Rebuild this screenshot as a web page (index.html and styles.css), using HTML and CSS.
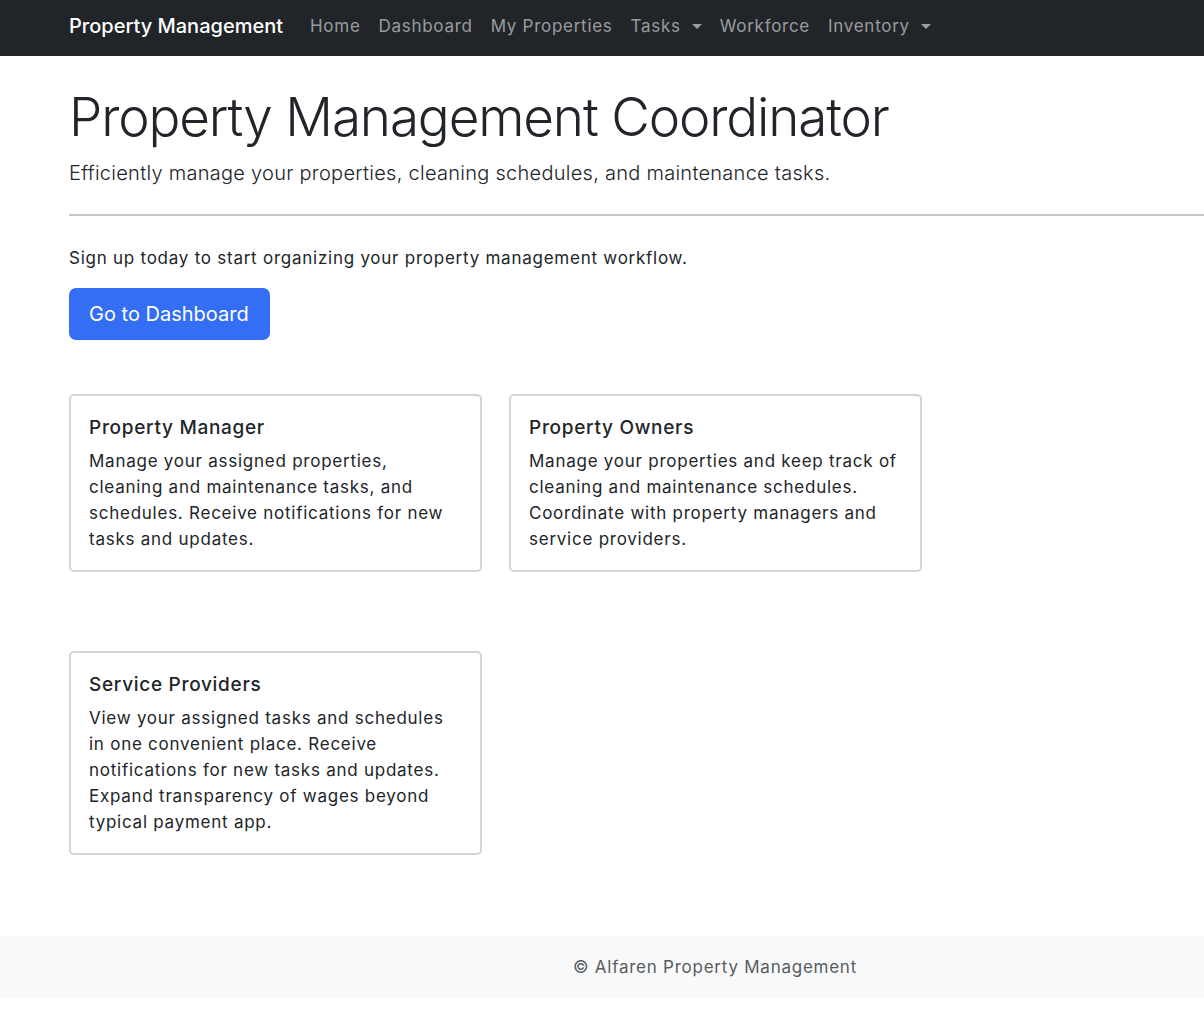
FILE: index.html
```html
<!DOCTYPE html>
<html lang="en">
<head>
<meta charset="utf-8">
<title>Property Management</title>
<link rel="stylesheet" href="styles.css">
</head>
<body>
<nav class="navbar">
  <a class="brand" href="#">Property Management</a>
  <ul class="nav">
    <li><a class="nav-link" href="#">Home</a></li>
    <li><a class="nav-link" href="#">Dashboard</a></li>
    <li><a class="nav-link" href="#">My Properties</a></li>
    <li><a class="nav-link dropdown" href="#">Tasks</a></li>
    <li><a class="nav-link" href="#">Workforce</a></li>
    <li><a class="nav-link dropdown" href="#">Inventory</a></li>
  </ul>
</nav>
<main class="main">
  <section class="hero">
    <h1 class="display">Property Management Coordinator</h1>
    <p class="lead">Efficiently manage your properties, cleaning schedules, and maintenance tasks.</p>
    <hr class="divider">
    <p class="signup">Sign up today to start organizing your property management workflow.</p>
    <a class="btn" href="#">Go to Dashboard</a>
  </section>
  <section class="cards">
    <div class="card">
      <h5 class="card-title">Property Manager</h5>
      <p class="card-text">Manage your assigned properties, cleaning and maintenance tasks, and schedules. Receive notifications for new tasks and updates.</p>
    </div>
    <div class="card">
      <h5 class="card-title">Property Owners</h5>
      <p class="card-text">Manage your properties and keep track of cleaning and maintenance schedules. Coordinate with property managers and service providers.</p>
    </div>
    <div class="card">
      <h5 class="card-title">Service Providers</h5>
      <p class="card-text">View your assigned tasks and schedules in one convenient place. Receive notifications for new tasks and updates. Expand transparency of wages beyond typical payment app.</p>
    </div>
  </section>
</main>
<footer class="footer">
  <span class="footer-text">© Alfaren Property Management</span>
</footer>
</body>
</html>
```
FILE: styles.css
```css
* { box-sizing: border-box; }
html, body { margin: 0; padding: 0; }
body {
  font-family: "Inter", "Noto Sans", sans-serif;
  color: #212529;
  background: #fff;
  overflow-x: hidden;
}
a { text-decoration: none; }

.navbar {
  height: 56px;
  background: #212529;
  display: flex;
  align-items: center;
  padding-left: 69px;
  padding-bottom: 4px;
}
.brand {
  color: #fff;
  font-size: 20px;
  font-weight: 450;
  letter-spacing: 0;
  margin-right: 18px;
}
.nav {
  display: flex;
  list-style: none;
  margin: 0;
  padding: 0;
}
.nav-link {
  display: flex;
  align-items: center;
  color: rgba(255,255,255,0.55);
  font-size: 17px;
  letter-spacing: 0.72px;
  padding: 8px 9px;
}
.dropdown::after {
  content: "";
  display: inline-block;
  margin-left: 11px;
  border-top: 5px solid;
  border-left: 5px solid transparent;
  border-right: 5px solid transparent;
}

.main {
  padding-left: 69px;
}
.hero {
  padding-top: 30px;
}
.display {
  margin: 0;
  font-size: 53px;
  font-weight: 300;
  letter-spacing: -1.15px;
  line-height: 1.2;
}
.lead {
  margin: 8px 0 0;
  font-size: 20px;
  font-weight: 300;
  letter-spacing: 0.27px;
  line-height: 30px;
}
.divider {
  margin: 26px 0 0;
  border: 0;
  border-top: 2px solid #c8c8c8;
  width: calc(100% + 20px);
}
.signup {
  margin: 29px 0 0;
  font-size: 17px;
  letter-spacing: 0.75px;
  line-height: 26px;
}
.btn {
  display: inline-block;
  margin-top: 17px;
  background: #346ef5;
  color: #fff;
  font-size: 20px;
  line-height: 30px;
  padding: 11px 21px 11px 20px;
  border-radius: 7px;
}

.cards {
  display: grid;
  grid-template-columns: 413px 413px;
  column-gap: 27px;
  row-gap: 79px;
  margin-top: 54px;
  align-items: start;
}
.card {
  border: 2px solid #d4d4d4;
  border-radius: 5px;
  padding: 18px 18px 18px;
}
.card-title {
  margin: 0 0 6px;
  font-size: 19px;
  font-weight: 500;
  letter-spacing: 0.7px;
  line-height: 28px;
}
.card-text {
  margin: 0;
  font-size: 17px;
  letter-spacing: 0.75px;
  line-height: 26px;
}

.footer {
  margin-top: 81px;
  height: 62px;
  background: #f8f9fa;
  display: flex;
  align-items: center;
  justify-content: center;
  padding-left: 226px;
}
.footer-text {
  color: #595c5f;
  font-size: 17px;
  letter-spacing: 0.75px;
}
```
